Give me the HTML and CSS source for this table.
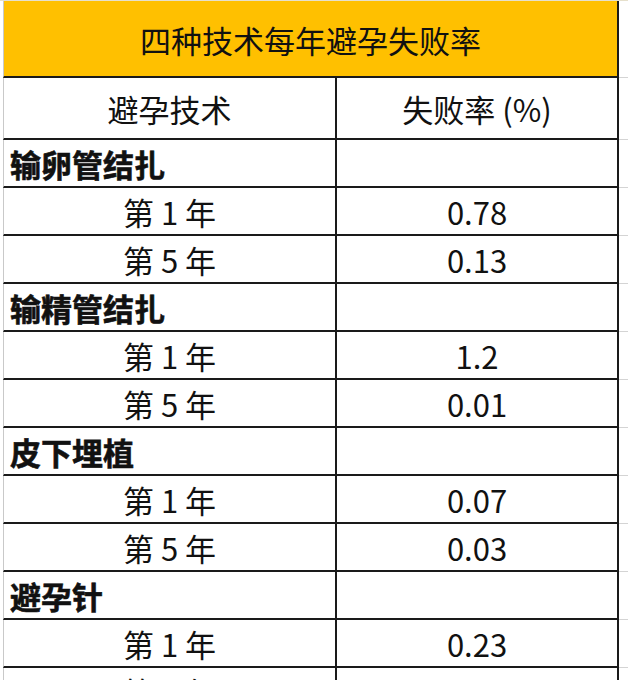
FILE: index.html
```html
<!DOCTYPE html>
<html lang="zh-CN">
<head>
<meta charset="utf-8">
<title>四种技术每年避孕失败率</title>
<link rel="stylesheet" href="styles.css">
</head>
<body>
<div class="sheet">
  <div class="cell title">四种技术每年避孕失败率</div><div class="grid"></div>

  <div class="cell c1">避孕技术</div><div class="cell c2">失败率 (%)</div><div class="grid"></div>

  <div class="cell c1 cat">输卵管结扎</div><div class="cell c2"></div><div class="grid"></div>
  <div class="cell c1">第 1 年</div><div class="cell c2">0.78</div><div class="grid"></div>
  <div class="cell c1">第 5 年</div><div class="cell c2">0.13</div><div class="grid"></div>

  <div class="cell c1 cat">输精管结扎</div><div class="cell c2"></div><div class="grid"></div>
  <div class="cell c1">第 1 年</div><div class="cell c2">1.2</div><div class="grid"></div>
  <div class="cell c1">第 5 年</div><div class="cell c2">0.01</div><div class="grid"></div>

  <div class="cell c1 cat">皮下埋植</div><div class="cell c2"></div><div class="grid"></div>
  <div class="cell c1">第 1 年</div><div class="cell c2">0.07</div><div class="grid"></div>
  <div class="cell c1">第 5 年</div><div class="cell c2">0.03</div><div class="grid"></div>

  <div class="cell c1 cat">避孕针</div><div class="cell c2"></div><div class="grid"></div>
  <div class="cell c1">第 1 年</div><div class="cell c2">0.23</div><div class="grid"></div>
  <div class="cell c1">第 5 年</div><div class="cell c2">0.30</div><div class="grid"></div>
</div>
</body>
</html>
```

FILE: styles.css
```css
html, body {
  margin: 0;
  padding: 0;
  background: #ffffff;
}

body {
  font-family: "Noto Sans CJK SC", "Noto Sans", sans-serif;
  color: #111111;
  overflow: hidden;
}

.sheet {
  display: grid;
  grid-template-columns: 334px 282px 9px;
  grid-template-rows: 77px 62px repeat(12, 48px);
  padding-left: 3px;
  border-top: 1px solid #e6e0cc;
}

.cell {
  box-sizing: border-box;
  display: flex;
  align-items: center;
  justify-content: center;
  font-size: 31px;
  line-height: 1;
  border-bottom: 2px solid #1a1a1a;
  white-space: nowrap;
}

.title {
  grid-column: 1 / span 2;
  background: #ffc000;
  border-left: 1px solid #c9c9c9;
  border-right: 2px solid #1a1a1a;
  padding-top: 2px;
}

.c1 {
  border-left: 1px solid #c9c9c9;
  border-right: 2px solid #1a1a1a;
}

.c2 {
  border-right: 2px solid #1a1a1a;
}

.cat {
  justify-content: flex-start;
  padding-left: 6px;
  font-weight: 700;
  -webkit-text-stroke: 0.6px #111111;
}

.grid {
  box-sizing: border-box;
  border-bottom: 1px solid #d4d4d4;
}
```
